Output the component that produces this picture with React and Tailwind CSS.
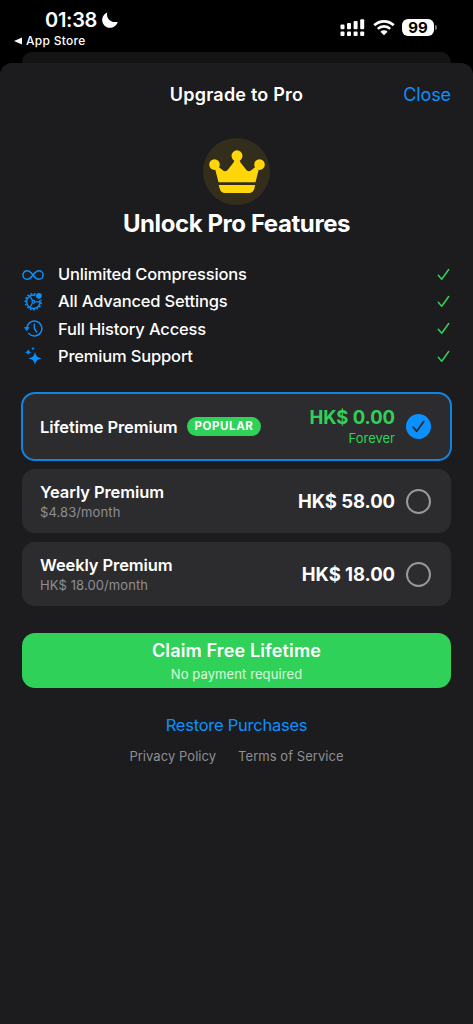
import { useState } from "react";

const FEATURES = [
  { label: "Unlimited Compressions", icon: InfinityIcon },
  { label: "All Advanced Settings", icon: GearIcon },
  { label: "Full History Access", icon: HistoryIcon },
  { label: "Premium Support", icon: SparklesIcon },
];

const PLANS = [
  {
    id: "lifetime",
    name: "Lifetime Premium",
    badge: "POPULAR",
    price: "HK$ 0.00",
    priceNote: "Forever",
  },
  {
    id: "yearly",
    name: "Yearly Premium",
    note: "$4.83/month",
    price: "HK$ 58.00",
  },
  {
    id: "weekly",
    name: "Weekly Premium",
    note: "HK$ 18.00/month",
    price: "HK$ 18.00",
  },
];

export default function App() {
  const [selected, setSelected] = useState("lifetime");

  return (
    <div className="flex h-[1024px] w-[473px] flex-col overflow-hidden bg-black font-['Inter',sans-serif] text-white">
      <StatusBar />

      {/* SHEET BEHIND */}
      <div className="mx-[22px] h-[11px] shrink-0 rounded-t-[10px] bg-[#141414]" />

      {/* SHEET */}
      <div className="flex-1 rounded-t-[12px] bg-[#1c1c1e] px-[22px]">
        <header className="grid h-[62px] grid-cols-[1fr_auto_1fr] items-center">
          <span />
          <h1 className="text-[18px] font-semibold tracking-[0.2px]">Upgrade to Pro</h1>
          <button className="justify-self-end text-[18px] tracking-[-0.1px] text-[#0a91ff]">
            Close
          </button>
        </header>

        {/* HERO */}
        <div className="flex flex-col items-center pt-[13px]">
          <div className="flex size-[67px] items-center justify-center rounded-full bg-[#322e1b]">
            <CrownIcon />
          </div>
          <h2 className="mt-[3px] text-[24px] leading-[32px] font-bold tracking-[-0.42px]">
            Unlock Pro Features
          </h2>
        </div>

        {/* FEATURES */}
        <ul className="mt-[21px]">
          {FEATURES.map(({ label, icon: Icon }) => (
            <li key={label} className="flex h-[27.200px] items-center">
              <span className="flex w-[22px] justify-center text-[#0a91ff]">
                <Icon />
              </span>
              <span className="ml-[14px] flex-1 text-[16.5px] font-medium tracking-[-0.17px]">
                {label}
              </span>
              <CheckIcon className="mr-[1px] h-[13px] w-[13px] text-[#30d158]" />
            </li>
          ))}
        </ul>

        {/* PLANS */}
        <div className="mt-[23px] flex flex-col gap-[8.600px]">
          {PLANS.map((plan) => (
            <PlanCard
              key={plan.id}
              plan={plan}
              active={selected === plan.id}
              onSelect={() => setSelected(plan.id)}
            />
          ))}
        </div>

        {/* ACTIONS */}
        <button className="mt-[26.600px] flex h-[55px] w-full flex-col items-center rounded-[13px] bg-[#30d158] pt-[6px]">
          <span className="text-[18px] leading-[24px] font-semibold tracking-[0.14px]">
            Claim Free Lifetime
          </span>
          <span className="text-[13px] leading-[22px] tracking-[0.1px] text-white/80">
            No payment required
          </span>
        </button>

        <div className="mt-[25px] flex flex-col items-center">
          <button className="text-[16.5px] leading-[24px] tracking-[-0.25px] text-[#0a91ff]">
            Restore Purchases
          </button>
          <div className="mt-[9px] flex gap-[22px] text-[13px] leading-[20px] tracking-[0.05px] text-[#8e8e93]">
            <a>Privacy Policy</a>
            <a>Terms of Service</a>
          </div>
        </div>
      </div>
    </div>
  );
}

/* ---------- STATUS BAR ---------- */
function StatusBar() {
  return (
    <div className="flex h-[52px] shrink-0 justify-between">
      <div className="pt-[9px] pl-[14px]">
        <div className="flex h-[22px] items-center pl-[31px]">
          <span className="text-[20px] font-semibold tracking-[-0.3px]">01:38</span>
          <svg viewBox="0 0 16 16" className="ml-[5px] size-4" fill="currentColor">
            <path d="M5.2.4C4 5 7.500 11.200 15.800 9.900 14.500 13.500 11.200 15.800 8 15.800 3.600 15.800.2 12.300.2 8 .2 4.600 2.400 1.600 5.200.4Z" />
          </svg>
        </div>
        <div className="flex h-[20px] items-center gap-[4px]">
          <svg viewBox="0 0 8 8" className="size-2" fill="currentColor">
            <path d="M0 4 8 .4v7.200Z" />
          </svg>
          <span className="text-[12px] font-medium tracking-[0.3px]">App Store</span>
        </div>
      </div>

      <div className="flex pt-[19px] pr-[36px]">
        <svg viewBox="0 0 25 18" className="h-[18px] w-[25px]" fill="currentColor">
          <rect x="0.500" y="5.500" width="4" height="4.800" rx="1" />
          <rect x="7" y="4" width="4" height="6.300" rx="1" />
          <rect x="13.600" y="2" width="4" height="8.300" rx="1" />
          <rect x="20.200" y="0.200" width="4" height="10.100" rx="1" />
          <rect x="0.500" y="12.500" width="4" height="4.500" rx="1" />
          <rect x="7" y="12.500" width="4" height="4.500" rx="1" />
          <rect x="13.600" y="12.500" width="4" height="4.500" rx="1" />
          <rect x="20.200" y="12.500" width="4" height="4.500" rx="1" />
        </svg>
        <svg viewBox="0 0 22 17" className="ml-[8px] h-[17px] w-[22px]" fill="none">
          <path d="M1.300 6.300a13.800 13.800 0 0 1 19.400 0" stroke="currentColor" strokeWidth="2.700" />
          <path d="M4.800 9.900a8.800 8.800 0 0 1 12.400 0" stroke="currentColor" strokeWidth="2.600" />
          <path d="M11 16.300 7.400 12.700a5.100 5.100 0 0 1 7.200 0Z" fill="currentColor" />
        </svg>
        <div className="ml-[7px] flex h-[17px] w-[32px] items-center justify-center rounded-[6px] bg-white text-[15px] leading-none font-bold text-black">
          99
        </div>
        <span className="mt-[6px] ml-[1px] h-[5px] w-[2px] rounded-r-full bg-[#777]" />
      </div>
    </div>
  );
}

/* ---------- PLAN CARD ---------- */
function PlanCard({ plan, active, onSelect }) {
  return (
    <button
      onClick={onSelect}
      className={`flex w-full items-center rounded-[13px] bg-[#2c2c2e] pr-[20px] pl-[18px] text-left ${
        active
          ? "h-[67.500px] outline-2 -outline-offset-1 outline-[#0f84e4]"
          : "h-[64.500px]"
      }`}
    >
      <span className="flex flex-1 flex-col">
        <span className="flex items-center">
          <span className="text-[16.5px] leading-[22px] font-semibold tracking-[-0.1px]">
            {plan.name}
          </span>
          {plan.badge && (
            <span className="ml-[10px] flex h-[19px] items-center rounded-full bg-[#30d158] px-[7px] text-[11.5px] font-bold tracking-[0.6px]">
              {plan.badge}
            </span>
          )}
        </span>
        {plan.note && (
          <span className="text-[13px] leading-[18px] tracking-[0.1px] text-[#8e8e93]">
            {plan.note}
          </span>
        )}
      </span>

      <span
        className={`flex flex-col items-end ${
          plan.priceNote ? "text-[#30d158]" : "text-white"
        }`}
      >
        <span className="text-[18.5px] leading-[23px] font-bold tracking-[-0.05px]">
          {plan.price}
        </span>
        {plan.priceNote && (
          <span className="text-[13px] leading-[19px]">{plan.priceNote}</span>
        )}
      </span>

      {active ? (
        <span className="ml-[11px] flex size-[25px] items-center justify-center rounded-full bg-[#0a91ff] text-[#2c2c2e]">
          <CheckIcon className="h-[13px] w-[13px]" strokeWidth={1.9} />
        </span>
      ) : (
        <span className="ml-[11px] size-[25px] rounded-full border-2 border-[#98989d]" />
      )}
    </button>
  );
}

/* ---------- ICONS ---------- */
function CheckIcon({ className, strokeWidth = 1.5 }) {
  return (
    <svg
      viewBox="0 0 13 13"
      className={className}
      fill="none"
      stroke="currentColor"
      strokeWidth={strokeWidth}
      strokeLinecap="round"
      strokeLinejoin="round"
    >
      <path d="M1.300 7.300 4.700 11.300 11.700 1.500" />
    </svg>
  );
}

function CrownIcon() {
  return (
    <svg viewBox="0 0 56 44" className="h-[44px] w-[56px]" fill="#ffd60a">
      <circle cx="28" cy="5.800" r="5.500" />
      <circle cx="5.500" cy="14.600" r="5.300" />
      <circle cx="50.500" cy="14.600" r="5.300" />
      <path d="M26 9h4l1.500 3.500 5.500 7c1.500 2 3.500 2.300 5.500.5L47 16.500l3 2-3.500 13.800H9.500L6 18.500l3-2 4.500 3.500c2 1.800 4 1.500 5.500-.5l5.500-7Z" />
      <path d="M9.800 35h36.400l-.7 3c-.9 3.400-2.500 5-5.500 5H16c-3 0-4.600-1.600-5.500-5Z" />
    </svg>
  );
}

function InfinityIcon() {
  return (
    <svg viewBox="0 0 22 12" className="h-[12px] w-[22px] shrink-0" fill="none" stroke="currentColor" strokeWidth="1.500">
      <path d="M11 6C9 3.300 7.600 1.700 5.200 1.700a4.300 4.300 0 0 0 0 8.600C7.600 10.300 9 8.700 11 6s3.400-4.300 5.800-4.300a4.300 4.300 0 0 1 0 8.600C14.400 10.300 13 8.700 11 6Z" />
    </svg>
  );
}

function GearIcon() {
  return (
    <svg viewBox="0 0 20 20" className="size-[19px] shrink-0" fill="none" stroke="currentColor" strokeWidth="1.500">
      <path d="M12 3.500A7.100 7.100 0 1 0 16.700 8.300" />
      <path d="M12.300 2.100A8.500 8.500 0 1 0 18.100 8.300" strokeWidth="1.500" strokeDasharray="1.900 1.700" />
      <circle cx="9.900" cy="10.300" r="1.500" strokeWidth="1.200" />
      <path d="M8.900 8.800 6.300 4.500M8.900 11.800l-2.600 4.300M11.700 10.300h5" strokeWidth="1.300" />
      <circle cx="15.700" cy="4" r="3" fill="currentColor" stroke="none" />
    </svg>
  );
}

function HistoryIcon() {
  return (
    <svg viewBox="0 0 20 18" className="h-[17px] w-[19px] shrink-0" fill="none" stroke="currentColor" strokeWidth="1.500" strokeLinecap="round" strokeLinejoin="round">
      <path d="M3 9A7.900 7.900 0 1 1 4.900 14.200" />
      <path d="M10.900 4.500V9l2.500 3.700" />
      <path d="M.8 8h4.400L3 11Z" fill="currentColor" strokeWidth="0.800" />
    </svg>
  );
}

function SparklesIcon() {
  return (
    <svg viewBox="0 0 18 20" className="h-[20px] w-[18px] shrink-0" fill="currentColor">
      <path d="M11 5.800c.9 4.500 2.200 5.700 6.600 6.600-4.400 1-5.700 2.200-6.600 6.600-.9-4.400-2.200-5.600-6.600-6.600 4.400-.9 5.700-2.100 6.600-6.600Z" />
      <path d="M4.200 3c.5 2.200 1 2.700 3.200 3.200-2.200.5-2.700 1-3.200 3.200-.5-2.200-1-2.700-3.200-3.200 2.200-.5 2.700-1 3.200-3.200Z" />
      <path d="M9 .4c.3 1.500.7 1.900 2.200 2.200-1.500.3-1.900.7-2.200 2.200-.3-1.500-.7-1.900-2.200-2.200 1.500-.3 1.900-.7 2.200-2.200Z" />
    </svg>
  );
}
